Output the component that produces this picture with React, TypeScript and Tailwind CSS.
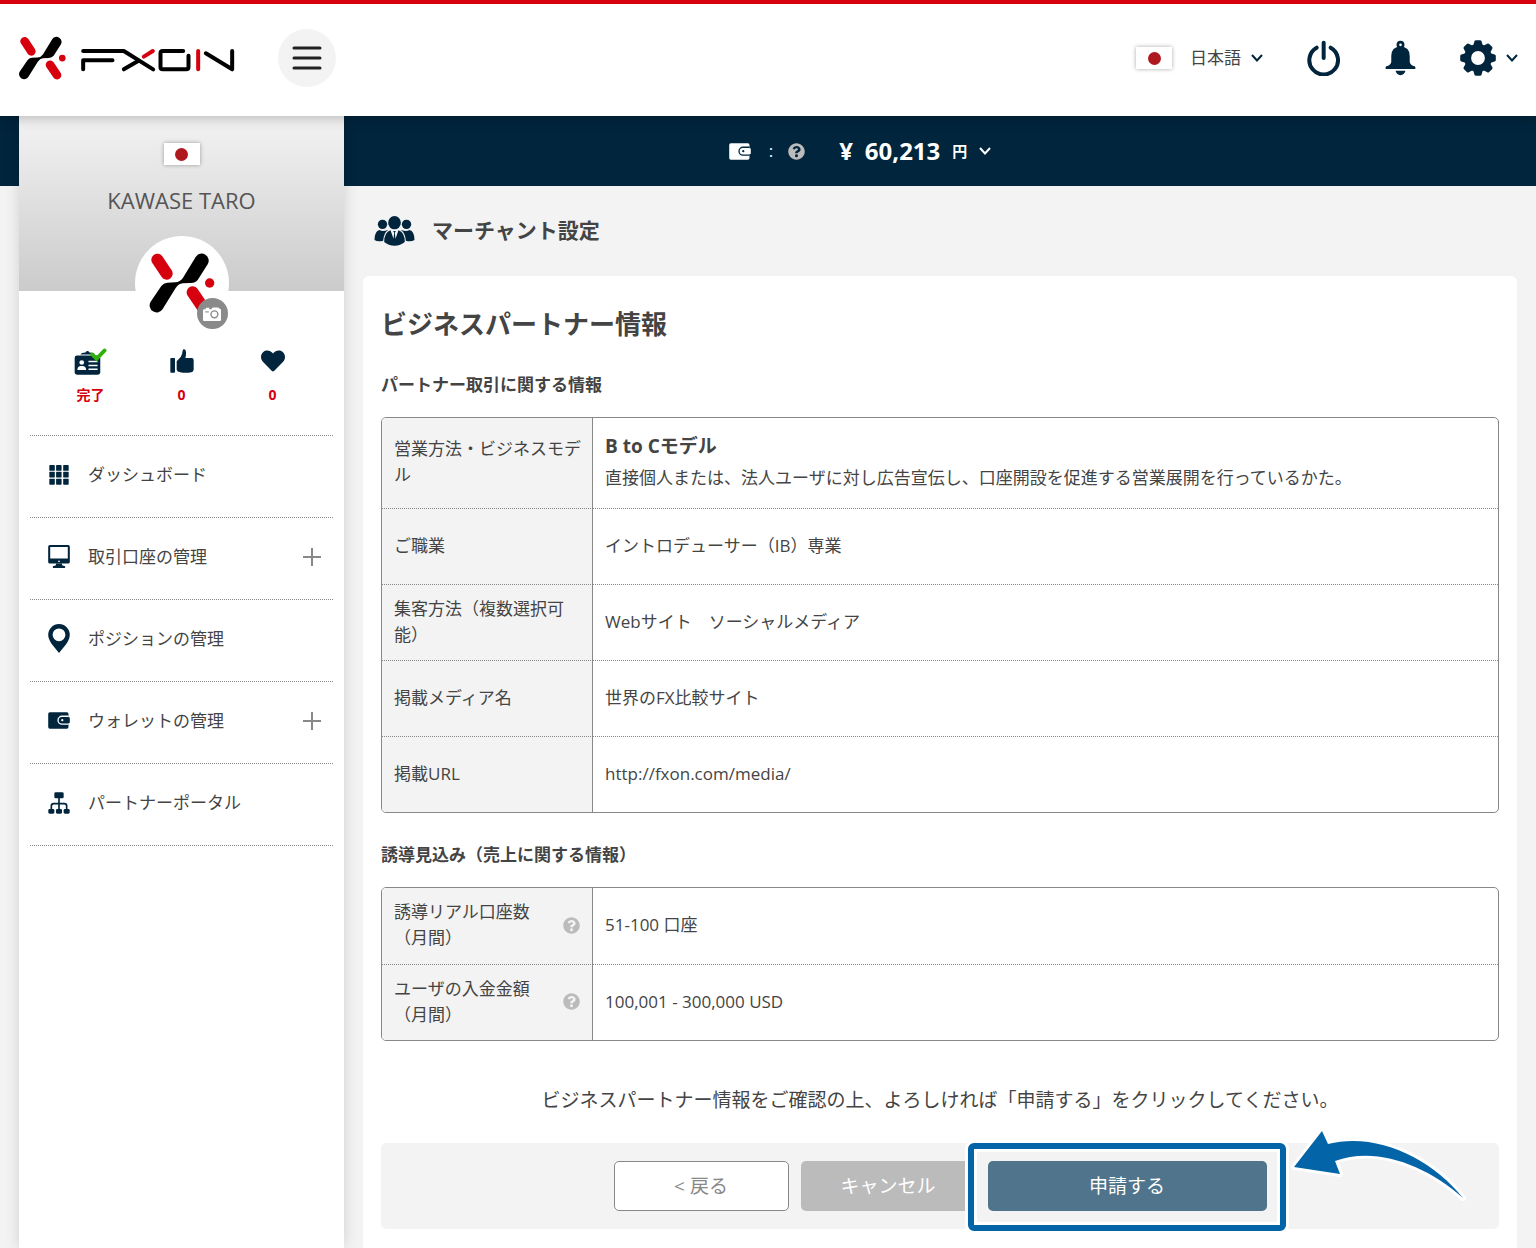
import type { ReactNode } from 'react';
import { FaHeart, FaQuestionCircle } from 'react-icons/fa';

interface MenuItem {
  label: string;
  icon: ReactNode;
  expandable?: boolean;
}

interface InfoRow {
  label: string;
  value: ReactNode;
  help?: boolean;
}

function LogoMark() {
  return (
    <>
      <path d="M474 450 L502 492" stroke="#d7000f" strokeWidth="36" strokeLinecap="round" />
      <path d="M580 548 L609 591" stroke="#d7000f" strokeWidth="36" strokeLinecap="round" />
      <circle cx="631" cy="520" r="14" fill="#d7000f" />
      <path
        d="M589 442 L551 504 Q542 517 528 518 L504 519 Q492 520 486 529 L454 576 A21 21 0 0 0 490 598 L529 535 Q538 522 550 521 L575 520 Q588 520 595 511 L625 464 A21 21 0 0 0 589 442Z"
        fill="#000"
      />
    </>
  );
}

function Logo() {
  return (
    <svg viewBox="54 108 650 132" className="h-[44px] w-[217px]" fill="none" role="img" aria-label="FXON">
      <g transform="translate(56 110) scale(.72) translate(-450 -431)">
        <LogoMark />
      </g>
      <g stroke="#000" strokeWidth="12" strokeLinecap="round" strokeLinejoin="round">
        <path d="M249 208 V181 H337" />
        <path d="M249 153 H371 L459 208" />
        <path d="M371 208 L415 182" />
        <path d="M549 153 H488 Q481 153 481 160 V201 Q481 208 488 208 H558 Q565 208 565 201 V167" />
        <path d="M617 160 L696 208 V153" />
      </g>
      <path d="M431 170 L458 153 M594 153 V208" stroke="#d7000f" strokeWidth="12" strokeLinecap="round" />
    </svg>
  );
}

function Flag() {
  return (
    <span className="flex h-[22px] w-9 shrink-0 items-center justify-center bg-white shadow-[0_0_4px_rgba(0,0,0,0.35)]">
      <span className="size-[13px] rounded-full bg-[#b01820]" />
    </span>
  );
}

function Chevron() {
  return (
    <svg viewBox="0 0 12 10" className="h-[10px] w-3 shrink-0" fill="none" stroke="currentColor" strokeWidth="2">
      <path d="M1 2 L6 7.5 L11 2" />
    </svg>
  );
}

function PowerIcon() {
  return (
    <svg viewBox="592 60 102 108" className="h-9 w-[34px]" fill="none" stroke="currentColor" strokeWidth="12" strokeLinecap="round">
      <path d="M621 83 A43 43 0 1 0 663 83" />
      <path d="M642 68 V114" />
    </svg>
  );
}

function BellIcon() {
  return (
    <svg viewBox="826 60 94 108" className="h-9 w-[31px]" fill="currentColor">
      <circle cx="873" cy="74" r="8" fill="none" stroke="currentColor" strokeWidth="8" />
      <path d="M845 126 V108 Q845 80 873 80 Q901 80 901 108 V126 Q903 136 916 139 Q919 140 918 147 H828 Q827 140 830 139 Q843 136 845 126Z" />
      <path d="M858 153 H888 Q884 166 873 166 Q862 166 858 153Z" />
    </svg>
  );
}

const GEAR_ANGLES = [0, 45, 90, 135, 180, 225, 270, 315];

function GearIcon() {
  return (
    <svg viewBox="-18 -18 36 36" className="size-9" fill="currentColor">
      <circle r="10.4" fill="none" stroke="currentColor" strokeWidth="7" />
      {GEAR_ANGLES.map(a => (
        <path key={a} transform={`rotate(${a})`} d="M-5.2 -11 L-3.6 -16.6 Q-3.2 -17.8 -2 -17.8 H2 Q3.2 -17.8 3.6 -16.6 L5.2 -11Z" />
      ))}
    </svg>
  );
}

function WalletIcon({ cut }: { cut: string }) {
  return (
    <svg viewBox="84 68 66 52" className="h-[17px] w-[22px] shrink-0">
      <rect x="84" y="69" width="62" height="50" rx="5" fill="currentColor" />
      <path d="M146 81 H126 A12 12 0 0 0 126 105 H146" fill="none" stroke={cut} strokeWidth="4" />
      <rect x="124" y="84" width="26" height="18" rx="2" fill="currentColor" />
      <circle cx="127" cy="93" r="3.5" fill={cut} />
    </svg>
  );
}

function PartnersIcon() {
  return (
    <svg viewBox="42 78 122 90" className="h-[30px] w-[41px]" fill="currentColor">
      <circle cx="67" cy="103" r="14" />
      <circle cx="139" cy="103" r="14" />
      <path d="M43 150 Q43 124 58 120 Q68 127 84 119 Q70 130 69 152 Q54 157 43 150Z" />
      <path d="M163 150 Q163 124 148 120 Q138 127 122 119 Q136 130 137 152 Q152 157 163 150Z" />
      <ellipse cx="103" cy="98" rx="19" ry="20" />
      <path d="M72 156 Q72 128 91 121 L100 146 L102 128 L99 123 H107 L104 128 L106 146 L115 121 Q134 128 134 156 Q121 167 103 167 Q85 167 72 156Z" />
    </svg>
  );
}

function IdCardIcon() {
  return (
    <svg viewBox="224 712 98 80" className="h-[27px] w-[33px]">
      <path d="M243 731 Q246 725 258 725 Q264 717 270 725 Q284 725 286 731Z" fill="currentColor" />
      <rect x="226" y="734" width="76" height="57" rx="7" fill="currentColor" />
      <circle cx="247" cy="755" r="7" fill="#fff" />
      <path d="M234 777 Q234 766 243 765 H251 Q260 766 260 777Z" fill="#fff" />
      <path d="M267 752 H294 M267 764 H294 M267 775 H294" stroke="#fff" strokeWidth="4" />
      <path d="M278 731 L291 744 L315 719" fill="none" stroke="#2eb208" strokeWidth="11" strokeLinecap="round" />
    </svg>
  );
}

function ThumbIcon() {
  return (
    <svg viewBox="119 357 72 72" className="size-6" fill="currentColor">
      <rect x="120" y="384" width="14" height="44" rx="2" />
      <path d="M139 394 L151 381 Q156 373 157 362 Q158 357 162 358 Q168 360 167 371 Q167 378 165 384 H184 Q190 384 190 391 V419 Q189 426 183 427 Q165 430 150 427 Q140 425 139 419Z" />
    </svg>
  );
}

function CameraIcon() {
  return (
    <svg viewBox="0 0 52 40" className="h-[14px] w-[18px]">
      <path d="M3 6 H8 V2 H18 V6 H24 L28 1 H44 L48 5 H49 Q52 5 52 9 V37 Q52 40 49 40 H3 Q0 40 0 37 V9 Q0 6 3 6Z" fill="#fff" />
      <circle cx="33" cy="21" r="10" fill="none" stroke="#8a8a8a" strokeWidth="4" />
      <path d="M6 14 H17" stroke="#8a8a8a" strokeWidth="3" />
    </svg>
  );
}

function GridIcon() {
  return (
    <svg viewBox="0 0 60 62" className="size-5" fill="currentColor">
      {[0, 21, 43].map(y => [0, 21, 43].map(x => <rect key={`${x}-${y}`} x={x} y={y} width="17" height="18" rx="2" />))}
    </svg>
  );
}

function MonitorIcon() {
  return (
    <svg viewBox="86 346 64 68" className="h-[23px] w-[22px]" fill="currentColor">
      <path fillRule="evenodd" d="M91 346 H145 Q150 346 150 351 V396 Q150 401 145 401 H91 Q86 401 86 396 V351 Q86 346 91 346Z M92 352 V386 H144 V352Z" />
      <circle cx="118" cy="394" r="2.5" fill="#fff" />
      <path d="M109 401 H127 V406 L136 409 V414 H100 V409 L109 406Z" />
    </svg>
  );
}

function PinIcon() {
  return (
    <svg viewBox="86 584 64 86" className="h-[29px] w-[22px]" fill="currentColor">
      <path fillRule="evenodd" d="M118 584 A32 32 0 0 1 150 616 Q150 629 139 644 L118 670 L97 644 Q86 629 86 616 A32 32 0 0 1 118 584Z M118 597 A19 19 0 1 0 118 635 A19 19 0 1 0 118 597Z" />
    </svg>
  );
}

function SitemapIcon() {
  return (
    <svg viewBox="86 1082 64 66" className="size-[22px]" fill="currentColor">
      <rect x="104" y="1083" width="28" height="18" rx="4" />
      <path d="M118 1100 V1136 M95 1136 V1124 Q95 1117 102 1117 H134 Q141 1117 141 1124 V1136" fill="none" stroke="currentColor" strokeWidth="5" />
      <rect x="86" y="1133" width="18" height="14" rx="4" />
      <rect x="109" y="1133" width="18" height="14" rx="4" />
      <rect x="132" y="1133" width="18" height="14" rx="4" />
    </svg>
  );
}

const MENU: MenuItem[] = [
  { label: 'ダッシュボード', icon: <GridIcon /> },
  { label: '取引口座の管理', icon: <MonitorIcon />, expandable: true },
  { label: 'ポジションの管理', icon: <PinIcon /> },
  { label: 'ウォレットの管理', icon: <WalletIcon cut="#fff" />, expandable: true },
  { label: 'パートナーポータル', icon: <SitemapIcon /> },
];

const STATS = [
  { id: 'verify', icon: <IdCardIcon />, value: '完了' },
  { id: 'likes', icon: <ThumbIcon />, value: '0' },
  { id: 'favorites', icon: <FaHeart className="size-6" />, value: '0' },
];

const PARTNER_ROWS: InfoRow[] = [
  {
    label: '営業方法・ビジネスモデル',
    value: (
      <>
        <strong className="block text-[19px] leading-8">B to Cモデル</strong>
        <span className="block leading-8">
          直接個人または、法人ユーザに対し広告宣伝し、口座開設を促進する営業展開を行っているかた。
        </span>
      </>
    ),
  },
  { label: 'ご職業', value: 'イントロデューサー（IB）専業' },
  { label: '集客方法（複数選択可能）', value: 'Webサイト　ソーシャルメディア' },
  { label: '掲載メディア名', value: '世界のFX比較サイト' },
  { label: '掲載URL', value: 'http://fxon.com/media/' },
];

const FORECAST_ROWS: InfoRow[] = [
  { label: '誘導リアル口座数（月間）', value: '51-100 口座', help: true },
  { label: 'ユーザの入金金額（月間）', value: '100,001 - 300,000 USD', help: true },
];

function Header() {
  return (
    <header className="relative z-10 flex h-[116px] items-center justify-between border-t-4 border-[#d7000f] bg-white px-[18px] pb-1 text-[#00253d] shadow-[0_2px_12px_rgba(0,0,0,0.25)]">
      <div className="flex items-center gap-[43px]">
        <a href="#home">
          <Logo />
        </a>
        <button className="flex size-[58px] items-center justify-center rounded-full bg-[#f3f3f3]" aria-label="メニュー">
          <svg viewBox="0 0 30 26" className="h-[26px] w-[30px]" stroke="#222" strokeWidth="3" strokeLinecap="round">
            <path d="M2 3 H28 M2 13 H28 M2 23 H28" />
          </svg>
        </button>
      </div>
      <div className="flex items-center gap-11">
        <div className="flex items-center">
          <Flag />
          <select aria-label="言語" className="ml-[18px] w-[61px] appearance-none bg-transparent text-[17px] text-[#444]">
            <option>日本語</option>
          </select>
          <Chevron />
        </div>
        <button aria-label="ログアウト">
          <PowerIcon />
        </button>
        <button aria-label="お知らせ">
          <BellIcon />
        </button>
        <button className="flex items-center gap-[10px]" aria-label="設定">
          <GearIcon />
          <Chevron />
        </button>
      </div>
    </header>
  );
}

function Sidebar() {
  return (
    <aside className="w-[325px] shrink-0 bg-white shadow-[0_0_14px_rgba(0,0,0,0.14)]">
      <div className="flex h-[175px] flex-col items-center bg-linear-to-b from-[#f3f3f3] to-[#cbcbcb] pt-[27px]">
        <Flag />
        <p className="mt-[21px] text-[22px] leading-7 text-[#555]">KAWASE TARO</p>
      </div>
      <div className="relative mx-auto -mt-[55px] flex size-[94px] items-center justify-center rounded-full bg-white">
        <svg viewBox="450 430 196 180" className="h-[60px] w-[66px]" fill="none">
          <LogoMark />
        </svg>
        <button className="absolute right-px bottom-px flex size-[31px] items-center justify-center rounded-full bg-[#8a8a8a]" aria-label="写真を変更">
          <CameraIcon />
        </button>
      </div>
      <div className="mt-[17px] grid grid-cols-3 px-[26px] text-[#00253d]">
        {STATS.map(s => (
          <div key={s.id} className="flex flex-col items-center">
            <div className="flex h-7 items-center">{s.icon}</div>
            <span className="mt-[10px] text-sm leading-5 font-bold text-[#d7000f]">{s.value}</span>
          </div>
        ))}
      </div>
      <nav className="mx-[11px] mt-[30px] border-t border-dotted border-[#888]">
        {MENU.map(item => (
          <a key={item.label} href="#menu" className="flex h-[82px] items-center border-b border-dotted border-[#888] pr-3 pb-1 pl-[18px]">
            <span className="flex w-[22px] justify-center text-[#00253d]">{item.icon}</span>
            <span className="ml-[18px] flex-1">{item.label}</span>
            {item.expandable && (
              <svg viewBox="0 0 18 18" className="size-[18px]" stroke="#888" strokeWidth="2">
                <path d="M9 0 V18 M0 9 H18" />
              </svg>
            )}
          </a>
        ))}
      </nav>
    </aside>
  );
}

function InfoTable({ rows, title }: { rows: InfoRow[]; title: string }) {
  return (
    <table aria-label={title} className="w-full table-fixed border-separate border-spacing-0 overflow-hidden rounded-[5px] border border-[#888]">
      <tbody>
        {rows.map((row, i) => {
          const line = i > 0 ? 'border-t border-t-[#888] [border-top-style:dotted]' : '';
          return (
            <tr key={row.label} className="h-[76px]">
              <th scope="row" className={`w-[211px] border-r border-r-[#888] bg-[#f3f3f3] pr-2 pb-0.5 pl-3 text-left leading-[26px] font-normal ${line}`}>
                {row.help ? (
                  <div className="flex items-center justify-between gap-4 pr-1">
                    <span>{row.label}</span>
                    <button className="shrink-0 text-[#bbb]" aria-label="ヘルプ">
                      <FaQuestionCircle className="size-[17px]" />
                    </button>
                  </div>
                ) : (
                  row.label
                )}
              </th>
              <td className={`px-3 pt-3 pb-[14px] ${line}`}>{row.value}</td>
            </tr>
          );
        })}
      </tbody>
    </table>
  );
}

function Actions() {
  return (
    <div className="flex justify-center gap-3 rounded-[5px] bg-[#f3f3f3] py-[18px] text-[19px]">
      <button className="h-[50px] w-[175px] rounded-[5px] border border-[#888] bg-white text-[#888]">&lt; 戻る</button>
      <button className="h-[50px] w-[175px] rounded-[5px] bg-[#bbb] text-white">キャンセル</button>
      <div className="relative">
        <button className="h-[50px] w-[279px] rounded-[5px] bg-[#50748b] text-white">申請する</button>
        <span className="pointer-events-none absolute -top-[18px] -right-[19px] -bottom-5 -left-5 rounded-md border-6 border-[#0464a8] shadow-[0_0_0_3px_#fff,inset_0_0_0_3px_#fff]" />
        <svg viewBox="1285 1123 190 85" className="pointer-events-none absolute -top-[38px] left-[298px] h-[85px] w-[190px]">
          <path
            d="M1293 1167 L1321 1131 L1327 1144 C1376 1132 1430 1158 1462 1198 C1424 1164 1374 1146 1334 1161 L1339 1174Z"
            fill="#0464a8"
            stroke="#fff"
            strokeWidth="6"
            strokeLinejoin="round"
            paintOrder="stroke"
          />
        </svg>
      </div>
    </div>
  );
}

export default function App() {
  return (
    <div className="flex min-h-screen flex-col bg-[#f3f3f3] font-['Open_Sans','Noto_Sans_CJK_JP',sans-serif] text-[17px] text-[#444]" lang="ja">
      <Header />
      <div className="flex flex-1 bg-[linear-gradient(#00253d_70px,#f3f3f3_70px)] pl-[19px]">
        <Sidebar />
        <div className="flex min-w-0 flex-1 flex-col">
          <div className="flex h-[70px] items-center justify-center pr-40 text-white">
            <WalletIcon cut="#00253d" />
            <span className="ml-[18px]">:</span>
            <button className="ml-[15px] text-[#bbb]" aria-label="ヘルプ">
              <FaQuestionCircle className="size-[17px]" />
            </button>
            <span className="ml-[34px] flex gap-3 text-2xl font-bold">
              <span>¥</span>
              <span>60,213</span>
            </span>
            <button className="ml-3 flex items-center gap-3 text-[15px] font-bold">
              円 <Chevron />
            </button>
          </div>
          <main className="flex flex-1 flex-col px-[19px]">
            <h1 className="flex h-[90px] items-center gap-[17px] pl-[11px] text-[21px] font-bold">
              <span className="text-[#00253d]">
                <PartnersIcon />
              </span>
              マーチャント設定
            </h1>
            <section className="flex-1 rounded-t-md bg-white px-[18px] pt-6 pb-[19px]">
              <h2 className="mb-[25px] text-[26px] leading-[48px] font-bold">ビジネスパートナー情報</h2>
              <h3 className="mb-5 leading-6 font-bold">パートナー取引に関する情報</h3>
              <InfoTable title="パートナー取引に関する情報" rows={PARTNER_ROWS} />
              <h3 className="mt-[30px] mb-5 leading-6 font-bold">誘導見込み（売上に関する情報）</h3>
              <InfoTable title="誘導見込み" rows={FORECAST_ROWS} />
              <p className="mt-[45px] mb-[29px] text-center text-[19px] leading-7">
                ビジネスパートナー情報をご確認の上、よろしければ「申請する」をクリックしてください。
              </p>
              <Actions />
            </section>
          </main>
        </div>
      </div>
    </div>
  );
}
